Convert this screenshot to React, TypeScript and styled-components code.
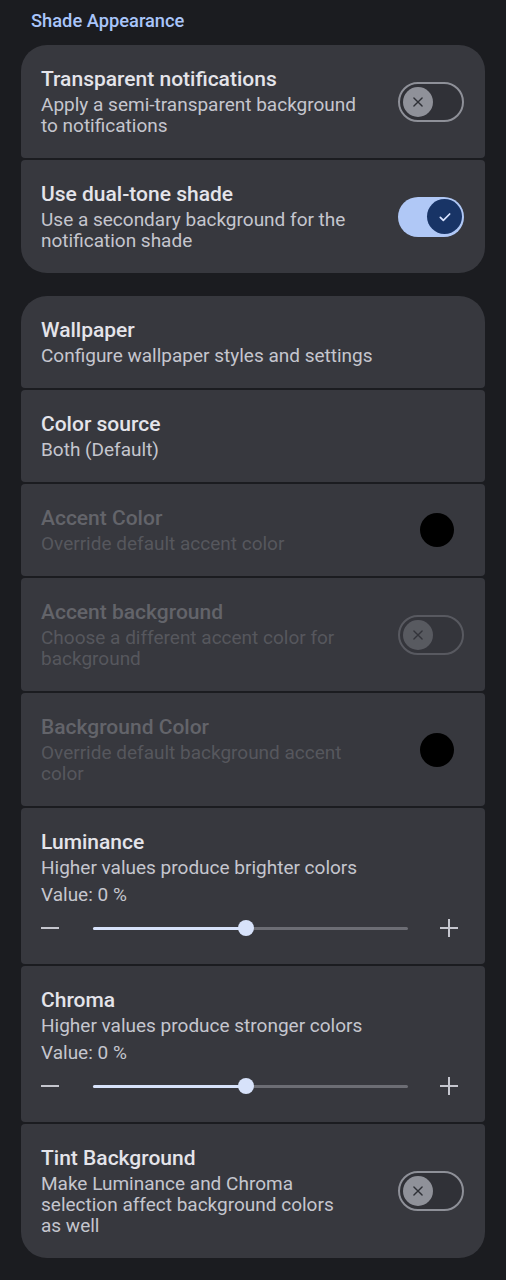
import React from 'react';
import styled, { createGlobalStyle } from 'styled-components';

const GlobalStyle = createGlobalStyle`
  html, body {
    margin: 0;
    padding: 0;
    background: #1b1c20;
  }
  body {
    font-family: Roboto, "Noto Sans", "Liberation Sans", sans-serif;
    -webkit-font-smoothing: antialiased;
  }
`;

const Page = styled.div`
  min-height: 1280px;
  padding: 9px 21px 0;
  box-sizing: border-box;
  display: flex;
  flex-direction: column;
  gap: 23px;
`;

const Section = styled.div`
  display: flex;
  flex-direction: column;
`;

const SectionTitle = styled.div`
  font-size: 18.3px;
  font-weight: 500;
  line-height: 24px;
  color: #a9c5fa;
  padding-left: 10px;
  margin-bottom: 12px;
`;

const Group = styled.div`
  display: flex;
  flex-direction: column;
  gap: 2px;
  border-radius: 26px;
  overflow: hidden;
`;

const Item = styled.div`
  background: #37383e;
  border-radius: 4px;
  padding: 22px 21px 22px 20px;
  display: flex;
  align-items: center;
  gap: 16px;
`;

const ItemBody = styled.div`
  flex: 1;
  min-width: 0;
  display: flex;
  flex-direction: column;
`;

const TextCol = styled.div<{ $wide?: boolean }>`
  max-width: ${(p) => (p.$wide ? 'none' : '316px')};
`;

const Title = styled.div<{ $disabled?: boolean }>`
  font-size: 21px;
  font-weight: 500;
  line-height: 24px;
  color: ${(p) => (p.$disabled ? '#63646a' : '#e4e4ea')};
`;

const Summary = styled.div<{ $disabled?: boolean }>`
  font-size: 19px;
  line-height: 21px;
  margin-top: 3px;
  color: ${(p) => (p.$disabled ? '#56575d' : '#c5c6ce')};
`;

const ValueText = styled.div`
  font-size: 19px;
  line-height: 21px;
  margin-top: 6px;
  color: #c5c6ce;
`;

const Track = styled.div<{ $on?: boolean; $disabled?: boolean }>`
  width: 66px;
  height: 40px;
  box-sizing: border-box;
  border-radius: 20px;
  flex-shrink: 0;
  display: flex;
  align-items: center;
  justify-content: ${(p) => (p.$on ? 'flex-end' : 'flex-start')};
  padding: ${(p) => (p.$on ? '0 2px' : '0 0 0 3px')};
  background: ${(p) => (p.$on ? '#b0c8f6' : '#303137')};
  border: ${(p) => (p.$on ? 'none' : '2.5px solid #8e9098')};
  opacity: ${(p) => (p.$disabled ? 0.38 : 1)};
`;

const Thumb = styled.div<{ $on?: boolean }>`
  width: ${(p) => (p.$on ? '35px' : '30px')};
  height: ${(p) => (p.$on ? '35px' : '30px')};
  border-radius: 50%;
  background: ${(p) => (p.$on ? '#183466' : '#8f9199')};
  display: flex;
  align-items: center;
  justify-content: center;
`;

const Swatch = styled.div`
  width: 34px;
  height: 34px;
  border-radius: 50%;
  background: #000;
  flex-shrink: 0;
  margin-right: 10px;
`;

const SliderRow = styled.div`
  display: flex;
  align-items: center;
  height: 32px;
  margin-top: 7px;
  margin-bottom: -2px;
  margin-right: 6px;
`;

const StepButton = styled.div`
  width: 18px;
  height: 32px;
  display: flex;
  align-items: center;
  justify-content: center;
  flex-shrink: 0;
`;

const SliderTrack = styled.div`
  position: relative;
  flex: 1;
  height: 3px;
  margin: 0 32px 0 34px;
  background: #6c6d74;
  border-radius: 2px;
`;

const SliderFill = styled.div`
  position: absolute;
  left: 0;
  top: 0;
  bottom: 0;
  background: #d7e2fa;
  border-radius: 2px;
`;

const SliderThumb = styled.div`
  position: absolute;
  top: 50%;
  width: 16px;
  height: 16px;
  border-radius: 50%;
  background: #d7e2fa;
  transform: translate(-50%, -50%);
`;

function Switch({ on, disabled }: { on?: boolean; disabled?: boolean }) {
  return (
    <Track $on={on} $disabled={disabled}>
      <Thumb $on={on}>
        {on ? (
          <svg width="16" height="16" viewBox="0 0 24 24" fill="none">
            <path d="M5 12.5l4.5 4.5L19 7.5" stroke="#d7e3ff" strokeWidth="2.6" strokeLinecap="round" strokeLinejoin="round" />
          </svg>
        ) : (
          <svg width="14" height="14" viewBox="0 0 24 24" fill="none">
            <path d="M5 5l14 14M19 5L5 19" stroke="#2e3036" strokeWidth="2.4" strokeLinecap="round" />
          </svg>
        )}
      </Thumb>
    </Track>
  );
}

function Slider({ percent }: { percent: number }) {
  return (
    <SliderRow>
      <StepButton>
        <svg width="18" height="18" viewBox="0 0 18 18">
          <path d="M0 9h18" stroke="#c5c6ce" strokeWidth="2" />
        </svg>
      </StepButton>
      <SliderTrack>
        <SliderFill style={{ width: `${percent}%` }} />
        <SliderThumb style={{ left: `${percent}%` }} />
      </SliderTrack>
      <StepButton>
        <svg width="18" height="18" viewBox="0 0 18 18">
          <path d="M0 9h18M9 0v18" stroke="#c5c6ce" strokeWidth="2" />
        </svg>
      </StepButton>
    </SliderRow>
  );
}

type Row = {
  title: string;
  summary: string;
  disabled?: boolean;
  trailing?: 'switch-off' | 'switch-on' | 'swatch';
  slider?: boolean;
};

const shadeRows: Row[] = [
  { title: 'Transparent notifications', summary: 'Apply a semi-transparent background to notifications', trailing: 'switch-off' },
  { title: 'Use dual-tone shade', summary: 'Use a secondary background for the notification shade', trailing: 'switch-on' },
];

const colorRows: Row[] = [
  { title: 'Wallpaper', summary: 'Configure wallpaper styles and settings' },
  { title: 'Color source', summary: 'Both (Default)' },
  { title: 'Accent Color', summary: 'Override default accent color', disabled: true, trailing: 'swatch' },
  { title: 'Accent background', summary: 'Choose a different accent color for background', disabled: true, trailing: 'switch-off' },
  { title: 'Background Color', summary: 'Override default background accent color', disabled: true, trailing: 'swatch' },
  { title: 'Luminance', summary: 'Higher values produce brighter colors', slider: true },
  { title: 'Chroma', summary: 'Higher values produce stronger colors', slider: true },
  { title: 'Tint Background', summary: 'Make Luminance and Chroma selection affect background colors as well', trailing: 'switch-off' },
];

function SettingRow({ row }: { row: Row }) {
  return (
    <Item>
      <ItemBody>
        <TextCol $wide={!row.trailing}>
          <Title $disabled={row.disabled}>{row.title}</Title>
          <Summary $disabled={row.disabled}>{row.summary}</Summary>
        </TextCol>
        {row.slider && (
          <>
            <ValueText>Value: 0 %</ValueText>
            <Slider percent={48.5} />
          </>
        )}
      </ItemBody>
      {row.trailing === 'switch-off' && <Switch disabled={row.disabled} />}
      {row.trailing === 'switch-on' && <Switch on />}
      {row.trailing === 'swatch' && <Swatch />}
    </Item>
  );
}

export default function App() {
  return (
    <>
      <GlobalStyle />
      <Page>
        <Section>
          <SectionTitle>Shade Appearance</SectionTitle>
          <Group>
            {shadeRows.map((r) => (
              <SettingRow key={r.title} row={r} />
            ))}
          </Group>
        </Section>
        <Group>
          {colorRows.map((r) => (
            <SettingRow key={r.title} row={r} />
          ))}
        </Group>
      </Page>
    </>
  );
}
